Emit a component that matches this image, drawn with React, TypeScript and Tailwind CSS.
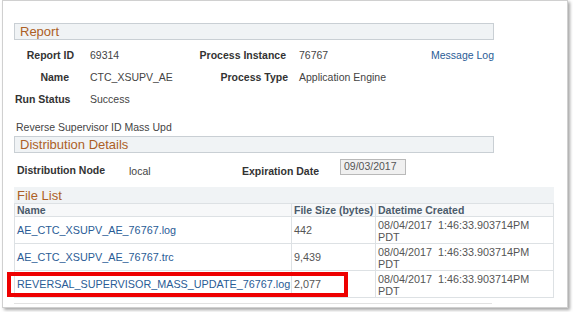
import React from 'react';

const files = [
  { name: 'AE_CTC_XSUPV_AE_76767.log', size: '442' },
  { name: 'AE_CTC_XSUPV_AE_76767.trc', size: '9,439' },
  { name: 'REVERSAL_SUPERVISOR_MASS_UPDATE_76767.log', size: '2,077', marked: true },
];

const SectionHeader: React.FC<{ title: string }> = ({ title }) => (
  <div className="w-[480px] h-[17px] border border-[#c9cfd4] bg-[#f0f3f5] pl-[5px] flex items-center">
    <span className="text-[13px] leading-none text-[#ad5f26]">{title}</span>
  </div>
);

export default function App() {
  return (
    <div className="w-[573px] h-[312px] bg-white font-['Liberation_Sans',Arial,sans-serif] text-[10.5px] overflow-hidden">
      <div className="ml-[2px] w-[566px] h-[308px] border border-[#d0d0d0] shadow-[2px_2px_3px_rgba(0,0,0,0.35)] pl-[11px] pt-[22px] bg-white">
        <SectionHeader title="Report" />

        {/* report fields */}
        <div className="mt-[5px] flex flex-col">
          <div className="flex items-center h-[22px]">
            <span className="w-[60px] text-right font-bold text-[#333]">Report ID</span>
            <span className="ml-[16px] w-[108px] text-[#444]">69314</span>
            <span className="w-[88px] text-right font-bold text-[#333]">Process Instance</span>
            <span className="ml-[13px] w-[132px] text-[#444]">76767</span>
            <span className="text-[#2a5c96]">Message Log</span>
          </div>
          <div className="flex items-center h-[22px]">
            <span className="w-[55px] text-right font-bold text-[#333]">Name</span>
            <span className="ml-[21px] w-[108px] text-[#444]">CTC_XSUPV_AE</span>
            <span className="w-[90px] text-right font-bold text-[#333]">Process Type</span>
            <span className="ml-[11px] text-[#444]">Application Engine</span>
          </div>
          <div className="flex items-center h-[21px]">
            <span className="ml-[1px] w-[58px] font-bold text-[#333]">Run Status</span>
            <span className="ml-[17px] text-[#444]">Success</span>
          </div>
        </div>

        <div className="mt-[10px] ml-[2px] h-[14px] leading-[14px] text-[#444]">Reverse Supervisor ID Mass Upd</div>

        <div className="mt-[2px]">
          <SectionHeader title="Distribution Details" />
        </div>

        <div className="flex items-start h-[34px] pt-[5px]">
          <span className="ml-[3px] mt-[5px] w-[112px] font-bold text-[#333]">Distribution Node</span>
          <span className="mt-[6px] w-[110px] text-[#444]">local</span>
          <span className="mt-[6px] w-[80px] text-right font-bold text-[#333]">Expiration Date</span>
          <span className="ml-[21px] mt-[1px] w-[66px] h-[16px] border border-[#b9b9b9] bg-[#f0f0f0] pl-[3px] leading-[13px] text-[#555]">09/03/2017</span>
        </div>

        {/* file list */}
        <div className="w-[540px] text-[10.8px]">
          <div className="h-[16px] bg-[#f0f3f5] pl-[3px] flex items-center">
            <span className="text-[13px] leading-none text-[#ad5f26]">File List</span>
          </div>
          <div className="border-l border-r border-[#dde1e4]">
            <div className="flex h-[14px] border-t border-b border-[#dde1e4] bg-[#f7f8f9] font-bold text-[#4b5b6b] leading-[13px] text-[10.5px]">
              <div className="w-[277px] pl-[2px] border-r border-[#dde1e4]">Name</div>
              <div className="w-[84px] pl-[2px] border-r border-[#dde1e4]">File Size (bytes)</div>
              <div className="flex-1 pl-[2px]">Datetime Created</div>
            </div>
            {files.map((f) => (
              <div key={f.name} className="relative flex h-[27px] border-b border-[#dde1e4]">
                <div className="w-[277px] pl-[2px] border-r border-[#dde1e4] flex items-center text-[#2a5c96]">{f.name}</div>
                <div className="w-[84px] pl-[2px] border-r border-[#dde1e4] flex items-center text-[#555]">{f.size}</div>
                <div className="flex-1 pl-[2px] pt-[2px] leading-[12px] text-[#555]">
                  08/04/2017&nbsp;&nbsp;1:46:33.903714PM
                  <br />
                  PDT
                </div>
                {f.marked && (
                  <div className="absolute left-[-8px] top-[1px] w-[341px] h-[25px] border-[4px] border-[#ee0000]" />
                )}
              </div>
            ))}
          </div>
          <div className="mt-[5px] w-[478px] h-px bg-[#e2e2e2]" />
        </div>
      </div>
    </div>
  );
}
